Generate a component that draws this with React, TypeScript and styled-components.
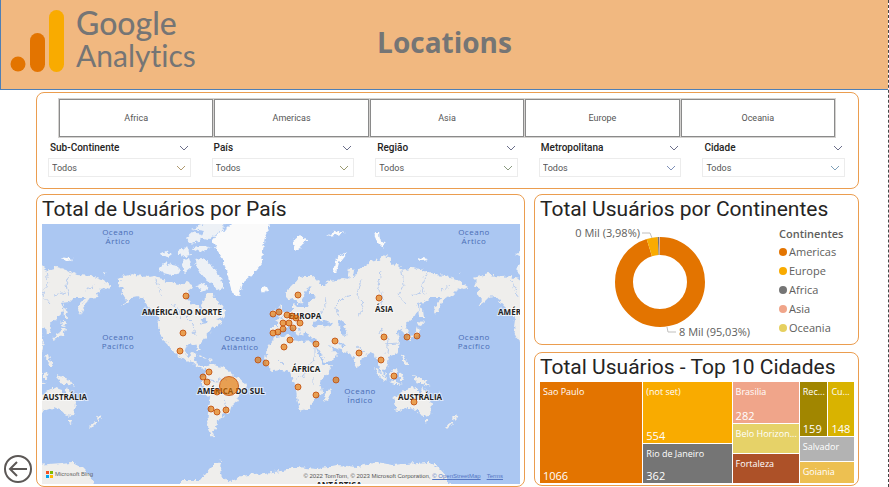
import React from "react";
import styled, { createGlobalStyle } from "styled-components";

const GlobalStyle = createGlobalStyle`
  * { box-sizing: border-box; }
  body {
    margin: 0;
    background: #fff;
    color: #252423;
    font-family: "Open Sans", "Noto Sans", sans-serif;
  }
  h1, h2, h3, ul, p { margin: 0; padding: 0; }
  ul { list-style: none; }
`;

const din = `Roboto, "Open Sans", sans-serif`;
const accent = "#eb9d4f";

const Page = styled.div`
  min-height: 100vh;
  display: flex;
  flex-direction: column;
  border-right: 1px dashed #444;
`;

const Header = styled.header`
  display: grid;
  grid-template-columns: 1fr auto 1fr;
  align-items: center;
  height: 90px;
  background: #f1b880;
  border-left: 1px solid #4f7fb5;
  border-bottom: 1px solid #4f7fb5;
`;

const Brand = styled.div`
  display: flex;
  align-items: center;
  gap: 12px;
  padding: 0 0 8px 9px;
`;

const BrandName = styled.div`
  display: flex;
  flex-direction: column;
  padding-bottom: 4px;
  color: #757575;
  font-family: Lato, sans-serif;
  font-size: 30px;
  font-variant-ligatures: none;
  line-height: 32px;
`;

const BrandStrong = styled.span`
  font-size: 32px;
  font-weight: 500;
`;

const PageTitle = styled.h1`
  color: #757575;
  font-size: 28px;
  font-weight: 700;
  line-height: 36px;
  padding-bottom: 6px;
`;

const Body = styled.div`
  flex: 1;
  display: grid;
  grid-template-columns: 36px minmax(0, 1fr);
  padding: 2px 29px 0 0;
`;

const Gutter = styled.nav`
  display: flex;
  align-items: flex-end;
  padding: 0 0 3px 3px;
`;

const BackButton = styled.button`
  display: block;
  width: 30px;
  height: 30px;
  padding: 0;
  border: 0;
  background: none;
`;

const Main = styled.main`
  display: flex;
  flex-direction: column;
  gap: 5px;
`;

const Card = styled.section`
  border: 1px solid ${accent};
  border-radius: 8px;
  background: #fff;
`;

const FilterCard = styled(Card)`
  display: flex;
  flex-direction: column;
  gap: 3px;
  height: 97px;
  padding: 6px 13px 0 11px;
`;

const Tiles = styled.div`
  display: grid;
  grid-template-columns: repeat(5, 1fr);
  gap: 1px;
  padding: 0 10px 0 11px;
`;

const Tile = styled.button`
  height: 38px;
  padding: 0;
  border: 1px solid #8a8a8a;
  outline: 1px solid #d4d2d0;
  background: #fff;
  color: #555;
  font-family: ${din};
  font-size: 9px;
`;

const Slicers = styled.div`
  display: grid;
  grid-template-columns: repeat(5, 1fr);
  gap: 21px;
`;

const SlicerHead = styled.div`
  display: flex;
  justify-content: space-between;
  align-items: center;
  height: 18px;
  padding: 0 2px 3px;
`;

const SlicerLabel = styled.label`
  color: #252423;
  font-family: ${din};
  font-size: 10px;
  font-weight: 500;
`;

const SelectWrap = styled.div`
  display: grid;
  align-items: center;
  border: 1px solid #ececec;
  height: 19px;
  & > * { grid-area: 1 / 1; }
  & > svg { justify-self: end; margin-right: 4px; pointer-events: none; }
`;

const Select = styled.select`
  appearance: none;
  width: 100%;
  height: 17px;
  padding: 0 3px;
  border: 0;
  background: transparent;
  color: #555;
  font-family: ${din};
  font-size: 9px;
`;

const Panels = styled.div`
  flex: 1;
  display: grid;
  grid-template-columns: minmax(0, 489fr) minmax(0, 325fr);
  gap: 9px;
`;

const ChartCard = styled(Card)`
  display: flex;
  flex-direction: column;
  padding: 0 4px 2px 5px;
`;

const ChartTitle = styled.h2`
  font-family: ${din};
  font-size: 21px;
  font-weight: 400;
  line-height: 29px;
  white-space: nowrap;
`;

const Side = styled.div`
  display: flex;
  flex-direction: column;
  gap: 7px;
`;

const MapFrame = styled.div`
  position: relative;
  & > svg { display: block; width: 100%; height: auto; }
`;

const MapCredit = styled.p`
  position: absolute;
  bottom: 2px;
  right: 17px;
  color: #555;
  font-family: "Liberation Sans", Arial, sans-serif;
  font-size: 6px;
  line-height: 12px;
  white-space: nowrap;
`;

const CreditLink = styled.a`
  color: #5577c4;
  & + & { margin-left: 6px; }
`;

const BingMark = styled.div`
  position: absolute;
  left: 4px;
  bottom: 4px;
  display: flex;
  align-items: center;
  gap: 2px;
  color: #666;
  font-family: "Liberation Sans", Arial, sans-serif;
  font-size: 6px;
  line-height: 12px;
`;

const DonutBody = styled.div`
  display: grid;
  grid-template-columns: minmax(0, 1fr) 75px;
  height: 118px;
`;

const Legend = styled.div`
  padding-top: 1px;
  color: #605e5c;
  font-size: 11px;
`;

const LegendTitle = styled.h3`
  font-size: 11px;
  font-weight: 600;
  line-height: 17px;
`;

const LegendItem = styled.li<{ $color: string }>`
  display: flex;
  align-items: center;
  gap: 2px;
  height: 19px;
  line-height: 19px;
  &::before {
    content: "";
    width: 8px;
    height: 8px;
    border-radius: 50%;
    background: ${(p) => p.$color};
  }
`;

const Treemap = styled.div`
  flex: 1;
  display: grid;
  grid-template-columns: 102fr 88fr 66fr 54fr;
  gap: 1px;
  min-height: 101px;
`;

const TreeColumn = styled.div<{ $rows: string }>`
  display: grid;
  grid-template-rows: ${(p) => p.$rows};
  gap: 1px;
  min-width: 0;
`;

const TreePair = styled.div`
  display: grid;
  grid-template-columns: minmax(0, 28fr) minmax(0, 26fr);
  gap: 1px;
`;

const Cell = styled.div<{ $color: string }>`
  display: flex;
  flex-direction: column;
  justify-content: space-between;
  min-width: 0;
  min-height: 0;
  padding: 3px 0 0 3px;
  background: ${(p) => p.$color};
  color: #fff;
  font-size: 9px;
  line-height: 13px;
  white-space: nowrap;
`;

const CellName = styled.span`
  flex: none;
`;

const CellValue = styled.span`
  font-size: 11px;
  line-height: 15px;
`;

function Chevron({ color = "#6b6f8a" }: { color?: string }) {
  return (
    <svg width="10" height="6" viewBox="0 0 10 6" fill="none" stroke={color} aria-hidden="true">
      <path d="M1 1l4 4 4-4" />
    </svg>
  );
}

const continents = ["Africa", "Americas", "Asia", "Europe", "Oceania"];
const slicers = [
  { name: "Sub-Continente", color: "#b09a70" },
  { name: "País", color: "#9a9a70" },
  { name: "Região", color: "#8a9a80" },
  { name: "Metropolitana", color: "#7f90b8" },
  { name: "Cidade", color: "#7fa0b8" },
];
const legend = [
  ["Americas", "#e37400"],
  ["Europe", "#f9ab00"],
  ["Africa", "#757575"],
  ["Asia", "#f0a58a"],
  ["Oceania", "#e6d060"],
];

/* One turn of the world is 356 units wide; it repeats to both sides. */
const WORLD = 356;
const land = [
  // North America
  "75,54 83,52 91,50 98,52 106,53 112,52 116,54 121,55 125,58 130,57 135,61 140,60 145,58 149,60 151,63 147,66 146,70 145,75 149,79 152,81 157,82 159,88 161,86 160,80 162,77 164,73 166,69 170,69 173,75 176,77 180,83 184,89 181,94 174,95 179,97 180,100 175,101 170,104 166,109 164,113 160,118 157,121 159,127 156,127 153,121 145,120 143,126 144,131 148,133 150,129 154,130 152,135 155,139 158,142 164,142 164,144 156,143 150,138 141,135 135,131 130,126 125,119 121,116 117,109 116,103 117,96 113,89 105,81 101,75 96,72 91,73 86,78 80,82 84,76 82,73 79,69 82,64 76,61 79,58",
  // South America
  "164,143 170,140 175,142 181,143 188,148 193,153 203,158 204,163 198,171 195,177 190,181 188,188 181,191 178,194 175,199 174,204 170,207 173,215 168,211 166,203 167,189 168,176 163,169 160,161 160,154 164,148",
  // Africa
  "223,136 225,124 231,116 233,113 248,111 251,116 261,118 270,117 273,121 278,134 281,141 290,141 285,149 278,158 280,168 273,174 268,184 258,187 255,173 253,161 250,154 248,148 241,146 231,147 225,142",
  "283,170 288,164 289,168 285,177 282,176",
  // Eurasia
  "228,112 228,103 236,103 236,98 233,96 241,94 245,91 251,86 251,79 255,83 265,83 267,77 275,73 272,71 267,71 267,66 269,62 264,65 262,73 260,79 256,81 253,75 247,76 244,73 244,68 253,59 257,54 261,52 270,52 278,58 277,61 283,61 286,57 295,56 300,54 306,55 308,44 312,46 311,54 316,47 321,43 328,38 334,37 341,31 350,34 348,41 355,40 361,46 371,43 381,46 391,51 405,52 415,56 426,63 421,66 415,64 411,73 404,74 401,76 398,83 395,91 392,85 395,79 400,73 388,73 383,78 375,79 377,86 371,94 366,98 364,102 366,109 361,109 360,104 355,106 355,109 358,118 356,128 351,131 346,133 345,137 347,142 341,146 344,153 340,150 336,139 333,131 328,129 320,134 316,144 313,139 310,131 303,128 293,124 288,121 291,127 297,130 291,136 283,139 279,130 273,121 275,114 267,113 264,107 261,112 257,105 252,102 259,109 256,112 250,102 243,104 237,109 232,113",
  // Australia
  "352,174 361,168 366,165 370,163 376,165 376,169 379,170 381,163 385,171 390,181 388,191 380,192 375,186 366,184 355,188",
  "383,196 386,196 385,200 383,199",
  "414,190 416,193 412,197 411,194",
  "409,198 411,199 405,205 403,203",
  // British Isles, Iceland, Japan
  "237,81 241,80 241,85 245,91 239,94 236,93 239,89",
  "230,88 234,86 235,91 230,92",
  "376,97 382,98 379,102 375,101",
  "376,103 379,106 377,111 369,115 366,117 367,113 374,109",
  "377,80 380,86 381,94 378,94",
  // South-east Asia and Oceania
  "332,143 336,146 345,156 342,157 336,151",
  "344,157 353,158 361,160 353,160",
  "347,149 354,144 356,148 353,155 348,154",
  "358,149 362,148 360,152 363,156 358,156",
  "371,151 376,153 383,156 388,163 381,160 376,160 373,156",
  "359,131 362,130 363,136 367,142 363,142",
  // Caribbean
  "155,131 160,132 165,135 160,134",
  "166,135 171,136 168,138",
  // Antarctic coast and peninsula
  "20,240 32,239 40,243 48,252 52,261 -20,261 -20,244 0,245",
  "376,240 388,239 396,243 404,252 408,261 336,261",
  "138,256 158,256 168,244 173,239 179,236 178,246 180,253 188,258 200,252 221,249 240,247 255,243 275,245 295,241 315,243 335,238 350,241 376,239 376,261 138,261",
];
const ice = [
  "173,23 170,16 175,10 185,4 191,-2 226,-2 227,3 223,13 221,26 220,39 210,51 201,59 197,72 191,71 188,61 185,49 181,35",
  "218,65 224,62 226,66 220,69",
  "250,18 257,12 265,14 260,22 254,27",
  "285,12 294,7 303,9 293,11",
  "332,8 337,8 338,16 343,20 341,24 334,17",
  "291,48 293,37 300,31 305,29 297,39 294,49",
  "375,34 386,36 379,37",
  "20,33 31,35 24,37",
];
const arctic = [
  "117,45 124,38 130,41 136,42 138,49 130,51 121,49",
  "118,30 124,27 130,30 125,34",
  "136,27 145,23 148,31 140,33",
  "144,14 151,8 160,10 157,18 149,20",
  "150,5 165,-1 185,-2 178,7 166,16 158,14 162,7",
  "150,24 160,21 169,24 158,28",
  "140,37 147,34 150,43 143,49",
  "152,35 161,34 170,42 179,54 182,63 175,66 170,59 162,53 156,46",
  "155,61 162,58 166,65 159,68",
  "61,48 64,49 62,51",
];
const lakes = [
  "270,98 277,94 281,97 290,99 287,103 277,101 271,103",
  "296,97 302,96 303,100 301,102 306,110 302,113 298,106",
  "157,95 163,94 166,99 160,100",
  "298,117 304,123 301,123 297,119",
];
const rivers = [
  "M317 92l5 -10 -7 -12 4 -15M334 87l8 -12 -6 -12 3 -17M364 80l-8 -9 6 -11 -2 -13M297 92l-4 -10 8 -8 9 -3M383 71l-3 -10 5 -12",
  "M184 155l-10 2 -10 -2M267 142l6 -9 0 -12M254 154l8 -2 -1 -8M153 112l-2 -12 -7 -7M120 74l-3 -9 -4 -10",
  "M278 90l6 -8 -1 -10M345 130l2 -15 -9 -5 3 -8M357 119l-15 1M323 128l-8 -5",
  "M399 67l9 -5M369 71l10 -3M185 187l-3 -12M242 141l-6 -6M130 81l9 5 -2 8M271 154v8",
];
const dots = [
  [144, 72], [141, 109], [138, 127], [167, 148], [161, 153], [165, 158], [175, 168], [169, 185],
  [175, 188], [184, 186], [216, 136], [224, 139], [231, 90], [237, 88], [245, 91], [250, 92],
  [254, 94], [258, 99], [241, 99], [247, 99], [251, 104], [241, 105], [236, 108], [231, 109],
  [256, 71], [337, 74], [248, 116], [242, 123], [274, 120], [293, 117], [342, 113], [365, 113],
  [375, 112], [317, 129], [339, 136], [352, 152], [294, 156], [256, 163], [274, 171], [372, 178],
];
const regions: [string, number, number][] = [
  ["AMÉRICA DO NORTE", 140, 91], ["AMÉRICA DO NORTE", 496, 91], ["EUROPA", 263, 95],
  ["ÁSIA", 342, 88], ["ÁFRICA", 264, 148], ["AMÉRICA DO SUL", 189, 170],
  ["AUSTRÁLIA", 23, 176], ["AUSTRÁLIA", 378, 176], ["ANTÁRTICA", 297, 264],
];
const oceans: [string, string, number, number][] = [
  ["Oceano", "Ártico", 76, 11], ["Oceano", "Ártico", 432, 11], ["Oceano", "Pacífico", 76, 116],
  ["Oceano", "Pacífico", 432, 116], ["Oceano", "Atlântico", 198, 117], ["Oceano", "Índico", 318, 170],
];

function WorldMap() {
  return (
    <svg viewBox="0 0 478 260" role="img" aria-label="Total de Usuários por País">
      <defs>
        <filter id="coast" x="-5%" y="-5%" width="110%" height="110%">
          <feTurbulence type="fractalNoise" baseFrequency="0.25" numOctaves="2" seed="4" result="n" />
          <feDisplacementMap in="SourceGraphic" in2="n" scale="6" xChannelSelector="R" yChannelSelector="G" />
        </filter>
        <g id="world">
          {land.map((p) => <polygon key={p} points={p} fill="#efeeec" />)}
          {arctic.map((p) => <polygon key={p} points={p} fill="#edf1f6" />)}
          {ice.map((p) => <polygon key={p} points={p} fill="#fafafa" />)}
          {lakes.map((p) => <polygon key={p} points={p} fill="#abc7f2" />)}
          {rivers.map((d) => <path key={d} d={d} fill="none" stroke="#b9cdee" strokeWidth="1" />)}
        </g>
      </defs>
      <rect width="478" height="260" fill="#abc7f2" />
      <g filter="url(#coast)">
        <use href="#world" x={-WORLD} />
        <use href="#world" />
        <use href="#world" x={WORLD} />
      </g>
      <g fontFamily="Open Sans, sans-serif" fontSize="8" fill="#4a6db5" textAnchor="middle" letterSpacing="0.5">
        {oceans.map(([a, b, x, y]) => (
          <text key={`${b}${x}`} x={x} y={y}>
            {a}
            <tspan x={x} dy="9">{b}</tspan>
          </text>
        ))}
      </g>
      <g
        fontFamily="Open Sans, sans-serif" fontSize="8" fontWeight="700" fill="#222"
        textAnchor="middle" stroke="#fff" strokeOpacity="0.6" strokeWidth="2" paintOrder="stroke"
      >
        {regions.map(([t, x, y]) => <text key={`${t}${x}`} x={x} y={y}>{t}</text>)}
      </g>
      <g fill="#e37400" fillOpacity="0.65" stroke="#c2500e" strokeOpacity="0.85">
        {dots.map(([x, y]) => <circle key={`${x}-${y}`} cx={x} cy={y} r="3" />)}
        <circle cx="187" cy="162" r="9.5" />
      </g>
    </svg>
  );
}

function Donut() {
  const arc = 2 * Math.PI * 36;
  const parts = [
    { color: "#e37400", from: 0, size: 0.9503 },
    { color: "#f9ab00", from: 0.9503, size: 0.0398 },
    { color: "#757575", from: 0.9901, size: 0.006 },
    { color: "#f0a58a", from: 0.9961, size: 0.0039 },
  ];
  return (
    <svg width="100%" height="118" viewBox="0 0 239 118" role="img" aria-label="Total Usuários por Continentes">
      <g transform="translate(120 58) rotate(-90)" fill="none" strokeWidth="18">
        {parts.map((p) => (
          <circle
            key={p.color} r="36" stroke={p.color}
            strokeDasharray={`${arc * p.size} ${arc}`} strokeDashoffset={-arc * p.from}
          />
        ))}
      </g>
      <path d="M102 9h8l2 5M127 103l1 5h8" fill="none" stroke="#c0bfbd" />
      <g fontFamily="Open Sans, sans-serif" fontSize="11" fill="#605e5c">
        <text x="100" y="13" textAnchor="end">0 Mil (3,98%)</text>
        <text x="139" y="112">8 Mil (95,03%)</text>
      </g>
    </svg>
  );
}

function TreeCell({ name, value, color }: { name: string; value?: number; color: string }) {
  return (
    <Cell $color={color}>
      <CellName>{name}</CellName>
      {value !== undefined && <CellValue>{value}</CellValue>}
    </Cell>
  );
}

export default function App() {
  return (
    <Page>
      <GlobalStyle />
      <Header>
        <Brand>
          <svg width="54" height="62" viewBox="0 0 54 62" aria-hidden="true">
            <circle cx="8" cy="54" r="7.5" fill="#e37400" />
            <rect x="20" y="23" width="15" height="39" rx="7.5" fill="#e37400" />
            <rect x="39" y="0" width="15" height="62" rx="7.5" fill="#f9ab00" />
          </svg>
          <BrandName>
            <BrandStrong>Google</BrandStrong>
            <span>Analytics</span>
          </BrandName>
        </Brand>
        <PageTitle>Locations</PageTitle>
      </Header>
      <Body>
        <Gutter>
          <BackButton aria-label="Voltar">
            <svg width="30" height="30" viewBox="0 0 30 30" fill="none" stroke="#5c5856" strokeWidth="2">
              <circle cx="15" cy="15" r="13" />
              <path d="M24 15H7M14 8l-7 7 7 7" />
            </svg>
          </BackButton>
        </Gutter>
        <Main>
          <FilterCard>
            <Tiles>
              {continents.map((c) => <Tile key={c}>{c}</Tile>)}
            </Tiles>
            <Slicers>
              {slicers.map((s) => (
                <div key={s.name}>
                  <SlicerHead>
                    <SlicerLabel htmlFor={s.name}>{s.name}</SlicerLabel>
                    <Chevron />
                  </SlicerHead>
                  <SelectWrap>
                    <Select id={s.name}>
                      <option>Todos</option>
                    </Select>
                    <Chevron color={s.color} />
                  </SelectWrap>
                </div>
              ))}
            </Slicers>
          </FilterCard>
          <Panels>
            <ChartCard>
              <ChartTitle>Total de Usuários por País</ChartTitle>
              <MapFrame>
                <WorldMap />
                <BingMark>
                  <svg width="7" height="7" viewBox="0 0 7 7" aria-hidden="true">
                    <path d="M0 0h3v3H0z" fill="#f25022" />
                    <path d="M4 0h3v3H4z" fill="#7fba00" />
                    <path d="M0 4h3v3H0z" fill="#00a4ef" />
                    <path d="M4 4h3v3H4z" fill="#ffb900" />
                  </svg>
                  Microsoft Bing
                </BingMark>
                <MapCredit>
                  © 2022 TomTom, © 2023 Microsoft Corporation,{" "}
                  <CreditLink href="#osm">© OpenStreetMap</CreditLink>
                  <CreditLink href="#terms">Terms</CreditLink>
                </MapCredit>
              </MapFrame>
            </ChartCard>
            <Side>
              <ChartCard>
                <ChartTitle>Total Usuários por Continentes</ChartTitle>
                <DonutBody>
                  <Donut />
                  <Legend>
                    <LegendTitle>Continentes</LegendTitle>
                    <ul>
                      {legend.map(([name, color]) => (
                        <LegendItem key={name} $color={color}>{name}</LegendItem>
                      ))}
                    </ul>
                  </Legend>
                </DonutBody>
              </ChartCard>
              <ChartCard>
                <ChartTitle>Total Usuários - Top 10 Cidades</ChartTitle>
                <Treemap>
                  <TreeCell name="Sao Paulo" value={1066} color="#e37400" />
                  <TreeColumn $rows="61fr 39fr">
                    <TreeCell name="(not set)" value={554} color="#f9ab00" />
                    <TreeCell name="Rio de Janeiro" value={362} color="#757575" />
                  </TreeColumn>
                  <TreeColumn $rows="41fr 30fr 29fr">
                    <TreeCell name="Brasilia" value={282} color="#f0a58a" />
                    <TreeCell name="Belo Horizon..." color="#e6d268" />
                    <TreeCell name="Fortaleza" color="#ad5128" />
                  </TreeColumn>
                  <TreeColumn $rows="55fr 24fr 21fr">
                    <TreePair>
                      <TreeCell name="Rec..." value={159} color="#a18600" />
                      <TreeCell name="Cu..." value={148} color="#d9b300" />
                    </TreePair>
                    <TreeCell name="Salvador" color="#b3b3b3" />
                    <TreeCell name="Goiania" color="#edc051" />
                  </TreeColumn>
                </Treemap>
              </ChartCard>
            </Side>
          </Panels>
        </Main>
      </Body>
    </Page>
  );
}
